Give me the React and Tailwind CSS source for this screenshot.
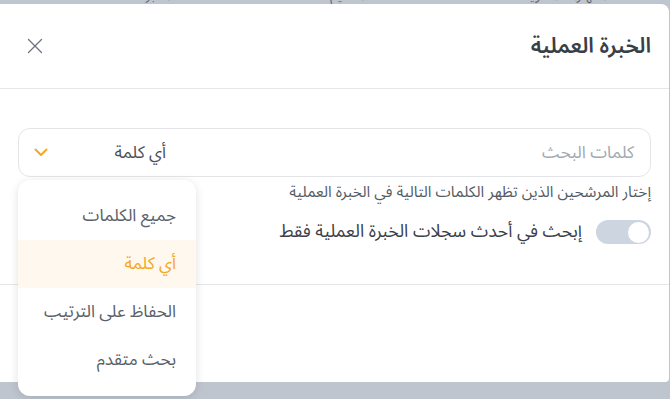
import { X } from 'lucide-react';

const options = ['جميع الكلمات', 'أي كلمة', 'الحفاظ على الترتيب', 'بحث متقدم'];

export default function App() {
  const selected = 'أي كلمة';

  return (
    <div
      className="relative h-[399px] w-[670px] overflow-hidden bg-[#bfc5cf]"
      style={{ fontFamily: '"Noto Sans Arabic", "Noto Sans", "DejaVu Sans", sans-serif' }}
    >
      {/* Page behind the overlay */}
      <div dir="rtl" className="h-[4px] overflow-hidden">
        <div className="-mt-[12px] flex gap-40 px-16 text-[13px] leading-[16px] text-[#5a6270]">
          <span>المهارات اللغوية</span>
          <span>التعليم</span>
          <span>الخبرة</span>
        </div>
      </div>

      {/* Modal */}
      <div dir="rtl" className="mr-[1px] flex h-[378px] w-[669px] flex-col rounded-tr-lg rounded-br-sm bg-white">
        {/* Header */}
        <div className="flex h-[85px] shrink-0 items-center justify-between border-b border-[#e4e6ea] pl-[22px] pr-[18px]">
          <h2 className="text-[21.5px] font-semibold leading-[30px] text-[#3a3f47]">الخبرة العملية</h2>
          <button className="text-[#6b7280]">
            <X className="h-[26px] w-[26px]" strokeWidth={1.2} />
          </button>
        </div>

        {/* Body */}
        <div className="h-[196px] shrink-0 border-b border-[#e4e6ea] px-[18px] pt-[39px]">
          <div className="flex h-[49px] items-center rounded-xl border border-[#e3e5e9]">
            <div className="flex-1 pr-[16px] text-[17px] leading-[24px] text-[#a3a8b1]">كلمات البحث</div>
            <div className="flex w-[162px] items-center justify-between pl-[15px] pr-[15px]">
              <span className="text-[17px] leading-[24px] text-[#4b5059]">أي كلمة</span>
              <svg width="14" height="9" viewBox="0 0 14 9" fill="none">
                <polyline points="1.5,1.5 7,7 12.5,1.5" stroke="#f5a623" strokeWidth="2" strokeLinecap="round" strokeLinejoin="round" />
              </svg>
            </div>
          </div>
          <p className="mt-[5px] text-[15.4px] leading-[20px] text-[#555b64]">
            إختار المرشحين الذين تظهر الكلمات التالية في الخبرة العملية
          </p>
          <div className="mt-[17px] flex items-center gap-[14px]">
            <div className="flex h-[24px] w-[55px] items-center rounded-full bg-[#cdd5e0] px-[2px]">
              <div className="h-[21px] w-[21px] rounded-full bg-white" />
            </div>
            <span className="text-[17.7px] leading-[26px] text-[#3b4048]">إبحث في أحدث سجلات الخبرة العملية فقط</span>
          </div>
        </div>

        <div className="flex-1" />
      </div>

      {/* Dropdown menu */}
      <div
        dir="rtl"
        className="absolute left-[18px] top-[180px] w-[178px] rounded-xl bg-white py-[12px] shadow-[0_2px_10px_rgba(0,0,0,0.12)]"
      >
        {options.map((opt) => (
          <div
            key={opt}
            className={
              opt === selected
                ? 'flex h-[48px] items-center bg-[#fff8ee] pr-[20px] text-[17px] leading-[24px] text-[#f5a623]'
                : 'flex h-[48px] items-center pr-[20px] text-[17px] leading-[24px] text-[#5a5f68]'
            }
          >
            {opt}
          </div>
        ))}
      </div>
    </div>
  );
}
